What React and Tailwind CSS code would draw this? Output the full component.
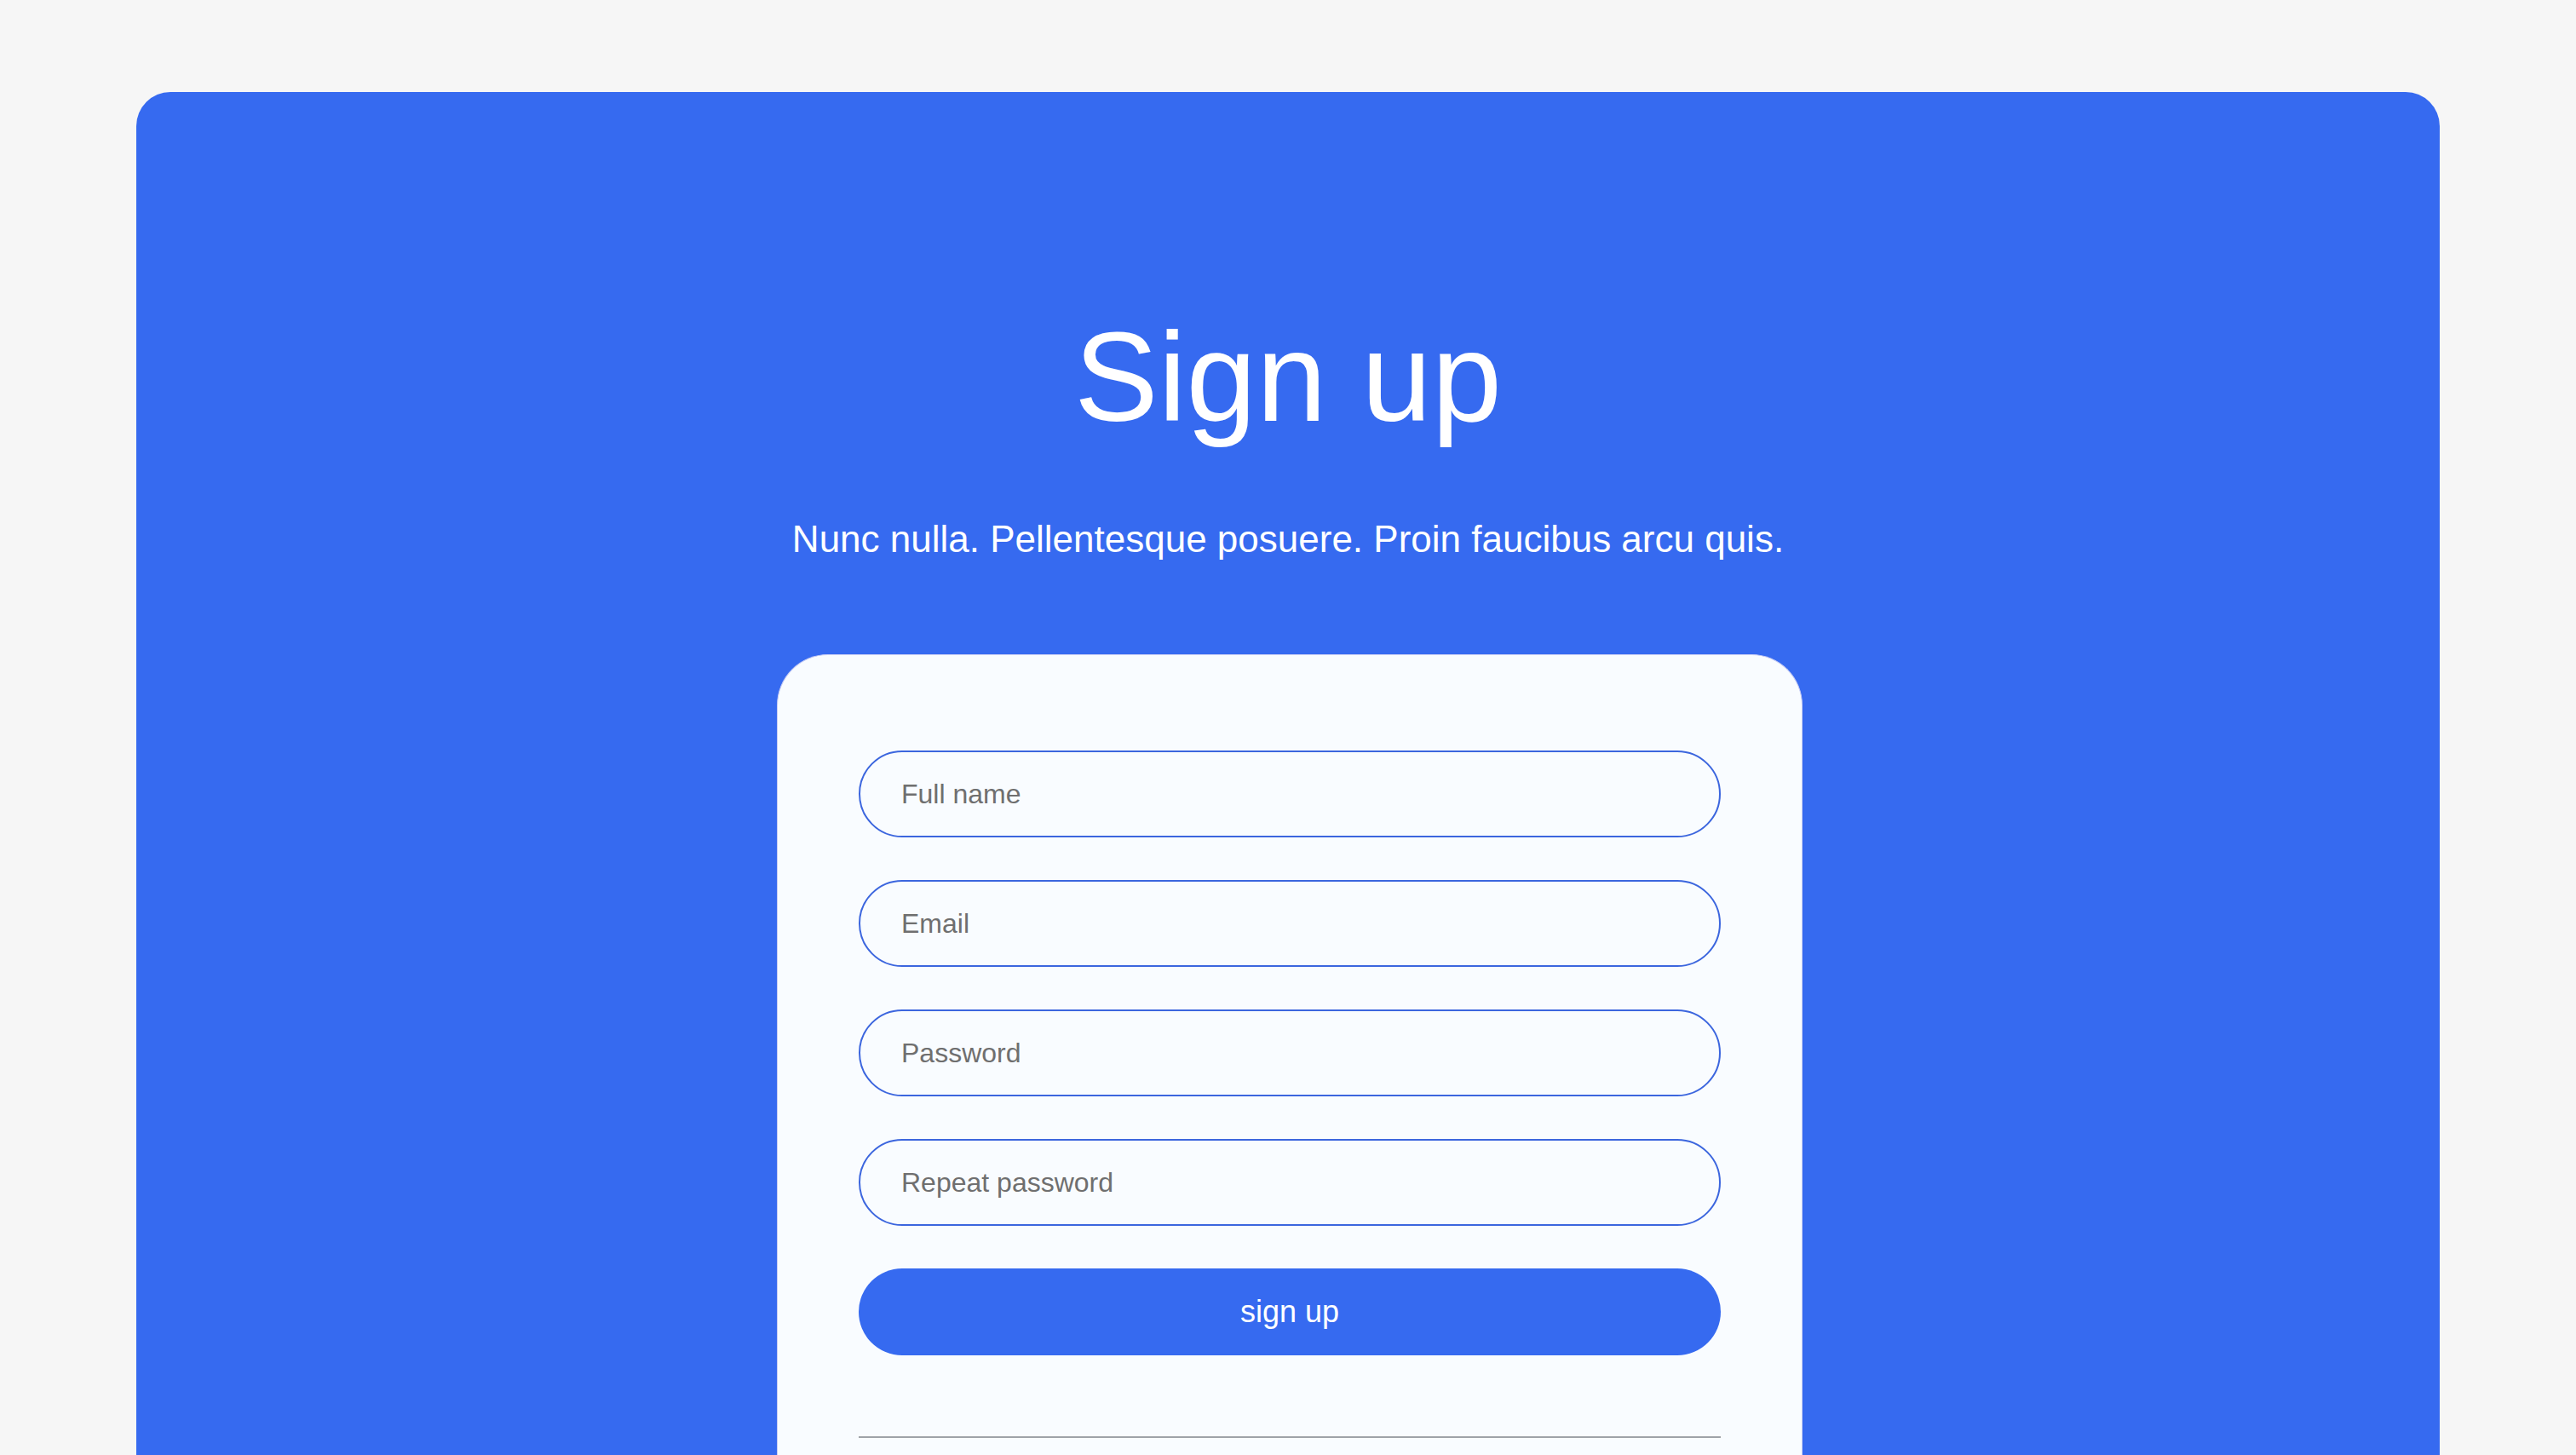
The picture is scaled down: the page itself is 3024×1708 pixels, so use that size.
const fields = [
  { name: 'fullName', type: 'text', placeholder: 'Full name' },
  { name: 'email', type: 'email', placeholder: 'Email' },
  { name: 'password', type: 'password', placeholder: 'Password' },
  { name: 'repeatPassword', type: 'password', placeholder: 'Repeat password' },
];

function Field({ name, type, placeholder }) {
  return (
    <input
      name={name}
      type={type}
      placeholder={placeholder}
      className="h-[102px] w-full rounded-full border-2 border-[#3c66de] bg-transparent px-[48px] text-[32px] text-[#333] outline-none placeholder:text-[#6f6f6f]"
    />
  );
}

export default function App() {
  return (
    <div className="h-screen overflow-hidden bg-[#f6f6f6] px-[160px] pt-[108px] font-['Liberation_Sans',Arial,sans-serif]">
      <section className="flex h-full flex-col items-center rounded-t-[40px] bg-[#366af0] pt-[261px] text-white">
        <h1 className="text-[148px] leading-none font-normal">Sign up</h1>
        <p className="mt-[94px] text-[44px] leading-none">
          Nunc nulla. Pellentesque posuere. Proin faucibus arcu quis.
        </p>

        <form
          className="mt-[113px] ml-[4px] flex w-[1204px] flex-1 flex-col rounded-t-[60px] border border-b-0 border-[#c7ccf4] bg-[#f9fcff] px-[95px] pt-[112px]"
          onSubmit={(e) => e.preventDefault()}
        >
          <div className="flex flex-col gap-[50px]">
            {fields.map((f) => (
              <Field key={f.name} {...f} />
            ))}
            <button
              type="submit"
              className="h-[102px] w-full rounded-full bg-[#366af0] text-[36px] text-white"
            >
              sign up
            </button>
          </div>
          <hr className="mt-[95px] border-t-2 border-[#9fa3a8]" />
        </form>
      </section>
    </div>
  );
}
